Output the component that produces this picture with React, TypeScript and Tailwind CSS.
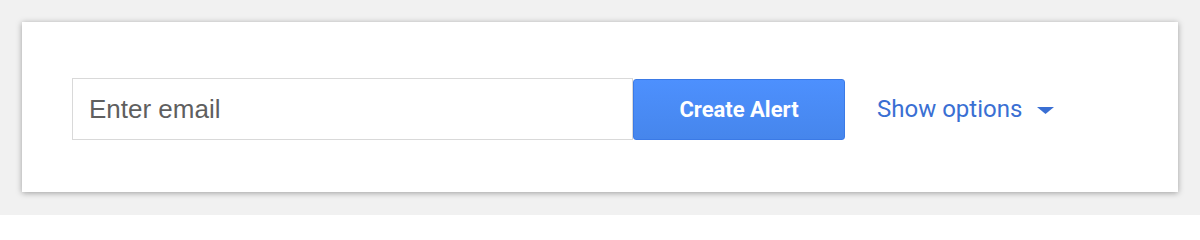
import React from 'react';

export default function App() {
  return (
    <div className="w-[1200px] h-[215px] bg-[#f1f1f1] pt-[22px] pl-[22px]">
      <div className="w-[1156px] h-[170px] bg-white shadow-[0_1px_6px_rgba(0,0,0,0.35)] pl-[50px] pt-[56px]">
        <form className="flex items-center" onSubmit={(e) => e.preventDefault()}>
          {/* Email field */}
          <input
            type="email"
            placeholder="Enter email"
            className="w-[561px] h-[62px] border border-[#d9d9d9] px-4 text-[26px] text-[#333] placeholder:text-[#5f5f5f] outline-none font-['Liberation_Sans',Arial,sans-serif]"
          />
          <button
            type="submit"
            className="w-[212px] h-[61px] rounded-[3px] border border-[#3b7ae6] bg-gradient-to-b from-[#4d90fe] to-[#4686ec] text-white text-[22px] font-bold font-['Roboto',Arial,sans-serif]"
          >
            Create Alert
          </button>
          <button
            type="button"
            className="ml-[32px] flex items-center text-[#3a6fd3] text-[24px] font-['Roboto',Arial,sans-serif]"
          >
            <span>Show options</span>
            <svg width="17" height="7" viewBox="0 0 17 7" className="ml-[15px] mt-[3px]">
              <path d="M0 0 L17 0 L8.5 7 Z" fill="#3a6fd3" />
            </svg>
          </button>
        </form>
      </div>
    </div>
  );
}
